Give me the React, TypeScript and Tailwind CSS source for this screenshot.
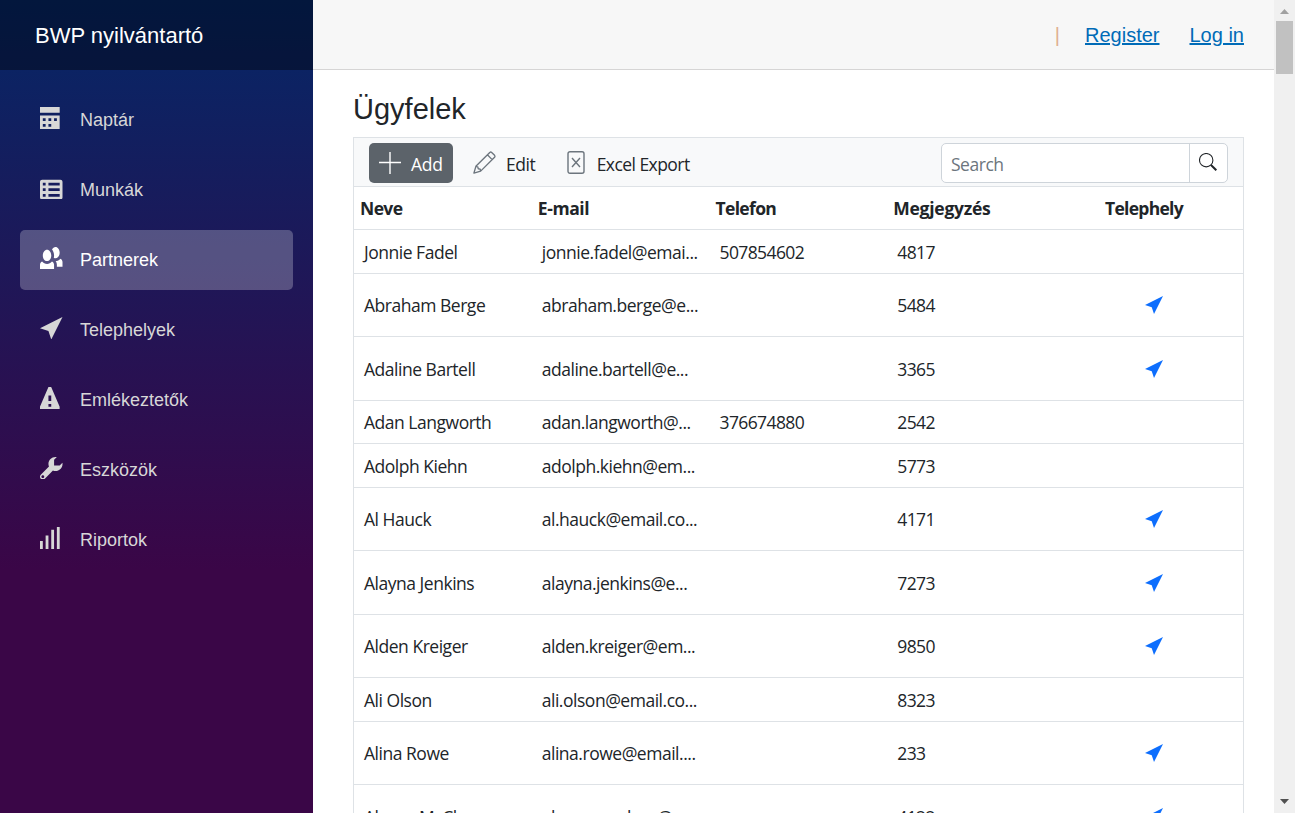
import React from "react";

const ICONS = {
  calendar:
    "M0 0v2h7v-2h-7zm0 3v4.91c0 .05.04.09.09.09h6.81c.05 0 .09-.04.09-.09v-4.91h-7zm1 1h1v1h-1v-1zm2 0h1v1h-1v-1zm2 0h1v1h-1v-1zm-4 2h1v1h-1v-1zm2 0h1v1h-1v-1z",
  spreadsheet:
    "M.75 1c-.41 0-.75.34-.75.75v5.5c0 .41.34.75.75.75h6.5c.41 0 .75-.34.75-.75v-5.5c0-.41-.34-.75-.75-.75h-6.5zm.25 1h1v1h-1v-1zm2 0h4v1h-4v-1zm-2 2h1v1h-1v-1zm2 0h4v1h-4v-1zm-2 2h1v1h-1v-1zm2 0h4v1h-4v-1z",
  people:
    "M5.5 0c-.51 0-.95.35-1.22.88.45.54.72 1.28.72 2.13 0 .29-.03.55-.09.81.19.11.38.19.59.19.83 0 1.5-.9 1.5-2s-.67-2-1.5-2zm-3 1c-.83 0-1.5.9-1.5 2s.67 2 1.5 2 1.5-.9 1.5-2-.67-2-1.5-2zm4.75 3.16c-.43.51-1.02.82-1.69.84.27.38.44.84.44 1.34v.66h2v-1.66c0-.52-.31-.97-.75-1.19zm-6.5 1c-.44.22-.75.67-.75 1.19v1.66h5v-1.66c0-.52-.31-.97-.75-1.19-.45.53-1.06.84-1.75.84s-1.3-.32-1.75-.84z",
  location: "M8 0l-8 4 3 1 1 3 4-8z",
  warning:
    "M3.09 0c-.06 0-.1.04-.13.09l-2.94 6.81c-.02.05-.03.13-.03.19v.81c0 .05.04.09.09.09h6.81c.05 0 .09-.04.09-.09v-.81c0-.05-.01-.14-.03-.19l-2.94-6.81c-.02-.05-.07-.09-.13-.09h-.81zm-.09 3h1v2h-1v-2zm0 3h1v1h-1v-1z",
  wrench:
    "M5.5 0c-1.38 0-2.5 1.12-2.5 2.5 0 .32.08.62.19.91l-2.91 2.88c-.39.39-.39 1.05 0 1.44.2.2.46.28.72.28.26 0 .52-.09.72-.28l2.88-2.91c.28.11.58.19.91.19 1.38 0 2.5-1.12 2.5-2.5 0-.16 0-.32-.03-.47l-.97.97h-2v-2l.97-.97c-.15-.03-.31-.03-.47-.03zm-4.5 6.5c.28 0 .5.22.5.5s-.22.5-.5.5-.5-.22-.5-.5.22-.5.5-.5z",
  signal: "M6 0v8h1v-8h-1zm-2 1v7h1v-7h-1zm-2 2v5h1v-5h-1zm-2 2v3h1v-3h-1z",
};

type IconName = keyof typeof ICONS;

function Icon({ name, className }: { name: IconName; className: string }) {
  return (
    <svg viewBox="0 0 8 8" fill="currentColor" className={className}>
      <path d={ICONS[name]} />
    </svg>
  );
}

const NAV: { label: string; icon: IconName; active?: boolean }[] = [
  { label: "Naptár", icon: "calendar" },
  { label: "Munkák", icon: "spreadsheet" },
  { label: "Partnerek", icon: "people", active: true },
  { label: "Telephelyek", icon: "location" },
  { label: "Emlékeztetők", icon: "warning" },
  { label: "Eszközök", icon: "wrench" },
  { label: "Riportok", icon: "signal" },
];

type Row = { name: string; email: string; phone?: string; note: string; site?: boolean; height: string };

const ROWS: Row[] = [
  { name: "Jonnie Fadel", email: "jonnie.fadel@emai...", phone: "507854602", note: "4817", height: "h-[44px] pt-[2px]" },
  { name: "Abraham Berge", email: "abraham.berge@e...", note: "5484", site: true, height: "h-[63px]" },
  { name: "Adaline Bartell", email: "adaline.bartell@e...", note: "3365", site: true, height: "h-[64px] pt-px" },
  { name: "Adan Langworth", email: "adan.langworth@...", phone: "376674880", note: "2542", height: "h-[43px]" },
  { name: "Adolph Kiehn", email: "adolph.kiehn@em...", note: "5773", height: "h-[44px] pt-[2px]" },
  { name: "Al Hauck", email: "al.hauck@email.co...", note: "4171", site: true, height: "h-[63px]" },
  { name: "Alayna Jenkins", email: "alayna.jenkins@e...", note: "7273", site: true, height: "h-[64px] pt-px" },
  { name: "Alden Kreiger", email: "alden.kreiger@em...", note: "9850", site: true, height: "h-[63px]" },
  { name: "Ali Olson", email: "ali.olson@email.co...", note: "8323", height: "h-[44px] pt-[2px]" },
  { name: "Alina Rowe", email: "alina.rowe@email....", note: "233", site: true, height: "h-[63px]" },
  { name: "Alyson McClure", email: "alyson.mcclure@...", note: "4122", site: true, height: "h-[64px] pt-px" },
];

const GRID = "grid grid-cols-[177.75px_177.75px_177.75px_177.75px_1fr] items-center";

function Sidebar() {
  return (
    <aside className="flex w-[313px] shrink-0 flex-col bg-[linear-gradient(180deg,rgb(5,39,103)_0%,#3a0647_70%)]">
      <div className="flex h-[70px] shrink-0 items-center bg-black/40 pl-[35px] text-[22px] text-white">
        <span>BWP nyilvántartó</span>
      </div>
      <nav className="flex flex-col gap-[10px] px-5 pt-5">
        {NAV.map((item) => (
          <a
            key={item.label}
            className={
              item.active
                ? "flex h-[60px] items-center rounded-[5px] bg-white/25 pl-5 text-[18px] text-white"
                : "flex h-[60px] items-center rounded-[5px] pl-5 text-[18px] text-[#d7d7d7]"
            }
          >
            <Icon name={item.icon} className="-mt-1 mr-[17.500px] size-[22.500px]" />
            {item.label}
          </a>
        ))}
      </nav>
    </aside>
  );
}

function Toolbar() {
  return (
    <div className="flex h-[49px] items-center border-b border-[#dee2e6] bg-[#f8f9fa] px-[15px] pt-[2px] text-[17.5px] tracking-[-0.48px] text-[#212529]">
      <button className="flex h-10 w-[84px] items-center rounded-[5px] bg-[#5c636a] pl-[10px] text-white">
        <svg viewBox="0 0 22 22" className="-mt-px mr-[10px] size-[22px]" fill="none" stroke="currentColor" strokeWidth="1.4">
          <path d="M11 0v22M0 10.500h22" />
        </svg>
        <span className="pt-[2px] tracking-[-0.3px]">Add</span>
      </button>
      <button className="ml-5 flex items-center">
        <svg viewBox="0 0 24 24" className="-mt-[2px] mr-[10px] size-[23px]" fill="none" stroke="#6c757d" strokeWidth="1.4" strokeLinejoin="round">
          <path d="M1 23l2-7L17.500 1.500q1-.8 2 0l3 3q.8 1 0 2L8 21l-7 2zM15 4l5 5M3 16l2 .5.5 2 2 .5.5 2" />
        </svg>
        <span className="pt-[2px]">Edit</span>
      </button>
      <button className="ml-[31.500px] flex items-center">
        <svg viewBox="0 0 18 23" className="-mt-[2px] mr-[12px] h-[23px] w-[18px]" fill="none" stroke="#6c757d" strokeWidth="1.4">
          <rect x="1" y="0.700" width="16" height="21.600" rx="2" />
          <path d="M5 7l8 9M13 7l-8 9" />
        </svg>
        <span className="pt-[2px] tracking-[-0.55px]">Excel Export</span>
      </button>
      <div className="ml-auto flex h-10 w-[287px] items-stretch overflow-hidden rounded-[5px] border border-[#ced4da] bg-white">
        <div className="flex flex-1 items-center pl-[9px] pt-[2px] text-[#6c757d]">Search</div>
        <div className="flex w-[38px] items-center justify-center border-l border-[#ced4da]">
          <svg viewBox="0 0 18 18" className="-mt-[3px] -ml-px size-[18px]" fill="none" stroke="#212529">
            <circle cx="7.200" cy="7.200" r="6.700" strokeWidth="1.100" />
            <path d="M12 12l5.300 5.300" strokeWidth="2" />
          </svg>
        </div>
      </div>
    </div>
  );
}

export default function App() {
  return (
    <div className="flex h-screen overflow-hidden bg-white font-['Liberation_Sans',Arial,sans-serif]">
      <Sidebar />
      <main className="flex min-w-0 flex-1 flex-col">
        <header className="flex h-[70px] shrink-0 items-center justify-end border-b border-[#d6d5d5] bg-[#f7f7f7] pr-[30px] text-[20px]">
          <span className="mr-[25px] text-[#dfb090]">|</span>
          <a className="mr-[30px] text-[#006bb7] underline">Register</a>
          <a className="text-[#006bb7] underline">Log in</a>
        </header>
        <section className="flex min-h-0 flex-1 flex-col overflow-hidden pl-10 pr-[30px] font-['Open_Sans','Noto_Sans',sans-serif] text-[#212529]">
          <h1 className="flex h-[67px] shrink-0 items-center pt-[13px] font-['Liberation_Sans',Arial,sans-serif] text-[29px]">
            <span>Ügyfelek</span>
          </h1>
          <div className="shrink-0 border border-[#dee2e6]">
            <Toolbar />
            <div className={GRID + " h-[43px] border-b border-[#dee2e6] pl-[6px] text-[17.5px] font-bold"}>
              <span className="tracking-[-0.6px]">Neve</span>
              <span className="tracking-[-0.4px]">E-mail</span>
              <span className="tracking-[-0.65px]">Telefon</span>
              <span className="tracking-[-0.25px]">Megjegyzés</span>
              <span className="pr-[26px] text-center tracking-[-0.7px]">Telephely</span>
            </div>
            {ROWS.map((r) => (
              <div key={r.name} className={GRID + " border-b border-[#dee2e6] pl-[10px] text-[17.5px] tracking-[-0.48px] " + r.height}>
                <span>{r.name}</span>
                <span>{r.email}</span>
                <span className="tracking-[-0.6px]">{r.phone}</span>
                <span className="tracking-[-0.6px]">{r.note}</span>
                <span className="-mt-px flex justify-center pr-[11px]">
                  {r.site && <Icon name="location" className="size-[18px] text-[#0d6efd]" />}
                </span>
              </div>
            ))}
          </div>
        </section>
      </main>
      <div className="flex w-[21px] shrink-0 flex-col items-center bg-[#f0f0f0]">
        <svg viewBox="0 0 21 21" className="size-[21px] shrink-0" fill="#a0a0a0">
          <path d="M6 14h9l-4.500-5z" />
        </svg>
        <div className="h-[53px] w-[17px] bg-[#c1c1c1]" />
        <svg viewBox="0 0 21 21" className="mt-auto size-[21px] shrink-0" fill="#505050">
          <path d="M6 7h9l-4.500 5z" />
        </svg>
      </div>
    </div>
  );
}
